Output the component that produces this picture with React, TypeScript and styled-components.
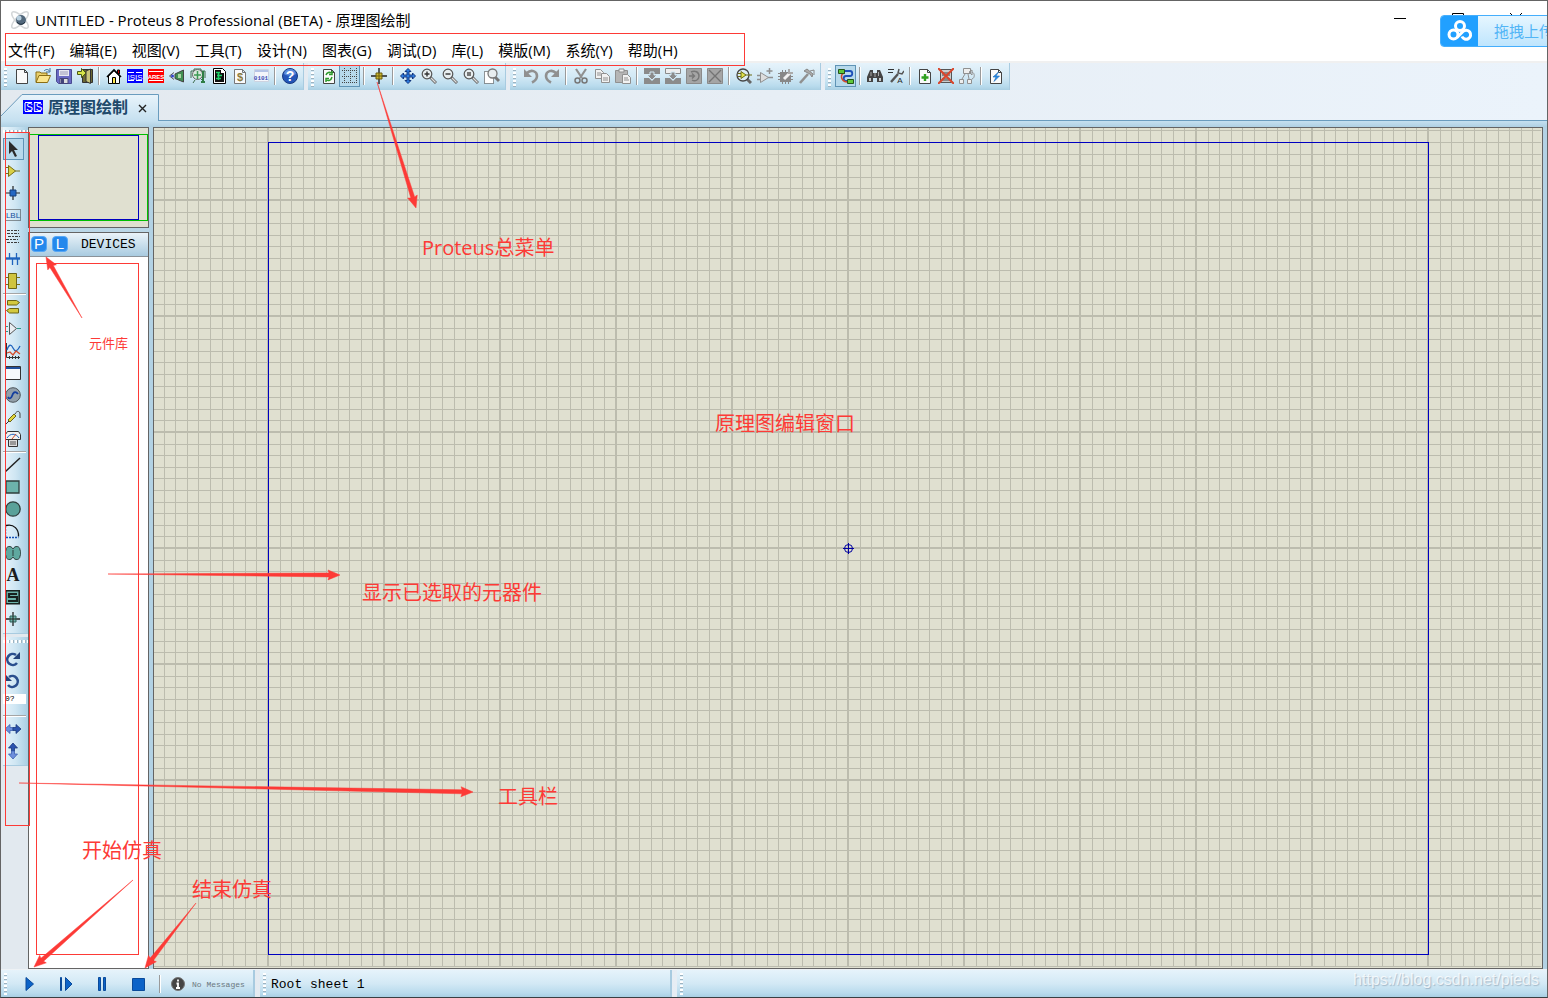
import React from 'react';
import styled, { createGlobalStyle, css } from 'styled-components';

const uiFont = '"Open Sans", "Noto Sans CJK SC", sans-serif';
const cjkFont = '"Noto Sans CJK SC", sans-serif';
const monoFont = '"Liberation Mono", "Noto Sans CJK SC", monospace';
const RED = '#fd3a36';
const EDGE = '#646464';

const GlobalStyle = createGlobalStyle`
  * { box-sizing: border-box; }
  body { margin: 0; background: #fff; overflow: hidden; }
  button { border: 0; padding: 0; background: none; font: inherit; color: inherit; }
`;

const Window = styled.div`
  position: relative;
  display: flex;
  flex-direction: column;
  height: 100vh;
  min-height: 700px;
  overflow: hidden;
  border: 1px solid ${EDGE};
  border-bottom-color: #3a3f42;
  background: linear-gradient(90deg, #e3e9ef, #ebf3fb);
  font-family: ${uiFont};
  color: #000;
`;

const TitleBar = styled.header`
  display: flex;
  align-items: center;
  gap: 5px;
  height: 37px;
  padding-left: 9px;
  background: #fff;
`;

const Title = styled.h1`
  flex: 1;
  margin: 0;
  font-size: 15px;
  font-weight: 400;
  line-height: 20px;
  white-space: pre;
`;

const Han = styled.span`
  font-family: ${cjkFont};
  font-size: 15px;
`;

const Caption = styled.div`
  display: flex;
  align-self: flex-start;
  margin-right: 2px;
`;

const CaptionButton = styled.button`
  display: flex;
  width: 58px;
  height: 34px;
  align-items: center;
  justify-content: center;
`;

const MenuBar = styled.nav`
  display: flex;
  gap: 15px;
  height: 25px;
  padding: 2px 0 1px 7px;
  border-bottom: 2px solid #f0f0f0;
  background: #fff;
`;

const MenuItem = styled.button`
  font-family: ${uiFont};
  font-size: 15px;
  line-height: 20px;
  white-space: nowrap;
`;

const ToolRow = styled.div`
  display: flex;
  gap: 4px;
  height: 27px;
`;

const barFill = css`
  background: linear-gradient(180deg, #e6f3fb 0%, #d3e9f5 50%, #b9dbed 85%, #a9cfe3 100%);
`;

const grip = css`
  background-image: repeating-linear-gradient(180deg, #fff 0 2px, #9db3c1 2px 3px, transparent 3px 4px);
`;

const ToolGroup = styled.div`
  position: relative;
  display: flex;
  align-items: center;
  padding: 0 3px 2px 10px;
  border-right: 1px solid #a8cbe0;
  ${barFill}
  &::before {
    content: '';
    position: absolute;
    left: 3px;
    top: 5px;
    bottom: 2px;
    width: 3px;
    ${grip}
  }
`;

const ToolButton = styled.button<{ $on?: boolean }>`
  display: flex;
  align-items: center;
  justify-content: center;
  width: 21px;
  height: 22px;
  ${(p) => p.$on && 'border: 1px solid #5f93b5; background: #b7d9ec;'}
`;

const Divider = styled.i`
  width: 2px;
  height: 18px;
  margin: 0 3px;
  background: linear-gradient(90deg, #9a9a9a 50%, #fff 50%);
`;

const TabRow = styled.div`
  display: flex;
  align-items: flex-end;
  height: 31px;
  &::after {
    content: '';
    flex: 1;
    height: 1px;
    background: #6a9cbe;
  }
`;

const Tab = styled.div`
  position: relative;
  display: flex;
  align-items: center;
  gap: 5px;
  width: 158px;
  height: 27px;
  padding-left: 22px;
`;

const TabShape = styled.svg`
  position: absolute;
  inset: 0;
`;

const TabLabel = styled.span`
  position: relative;
  padding-bottom: 4px;
  font-family: ${cjkFont};
  font-size: 16px;
  font-weight: 700;
  line-height: 20px;
  color: #1f4a6b;
`;

const TabIcon = styled.span`
  position: relative;
  display: flex;
  padding-bottom: 2px;
`;

const TabClose = styled.button`
  position: relative;
  display: flex;
  margin-left: 5px;
  padding-top: 1px;
`;

const Band = styled.div`
  height: 6px;
  background: linear-gradient(180deg, #c5e0f0, #afd0e3);
`;

const Body = styled.main`
  display: flex;
  flex: 1;
  min-height: 0;
  padding-right: 4px;
  background: #b3d2e4;
`;

const SideColumn = styled.div`
  display: flex;
  flex-direction: column;
  gap: 3px;
  width: 27px;
  padding-left: 2px;
  background: #e2e9ef;
`;

const SideBar = styled.div`
  position: relative;
  display: flex;
  flex-direction: column;
  align-items: flex-start;
  padding: 11px 0 3px 0;
  border-bottom: 1px solid #a8cbe0;
  background: linear-gradient(90deg, #e8f4fb 0%, #cfe6f3 50%, #a9cfe4 100%);
  &::before {
    content: '';
    position: absolute;
    left: 0;
    right: 0;
    top: 3px;
    height: 3px;
    background-image: repeating-linear-gradient(90deg, #fff 0 2px, #9db3c1 2px 3px, transparent 3px 4px);
  }
`;

const SideButton = styled(ToolButton)`
  padding-right: 1px;
`;

const SideDivider = styled.i`
  width: 23px;
  height: 2px;
  margin: 1px 0;
  background: linear-gradient(180deg, #a5a5a5 50%, #fff 50%);
`;

const AngleInput = styled.input`
  width: 23px;
  height: 10px;
  margin: 2px 0 10px;
  padding: 0 2px;
  border: 0;
  background: #fff;
  font-family: ${monoFont};
  font-size: 8px;
  line-height: 10px;
`;

const Panels = styled.div`
  display: flex;
  flex-direction: column;
  gap: 4px;
  width: 121px;
  margin-right: 4px;
  background: linear-gradient(180deg, #b3d2e4, #f2f8fb);
`;

const Overview = styled.div`
  height: 101px;
  border: 1px solid ${EDGE};
  background: #e0e0d0;
  & svg { display: block; }
`;

const Devices = styled.section`
  display: flex;
  flex: 1;
  flex-direction: column;
  border: 1px solid ${EDGE};
  background: #fff;
`;

const DevicesHead = styled.div`
  display: flex;
  align-items: center;
  gap: 5px;
  height: 24px;
  padding: 0 0 1px 2px;
  border-bottom: 1px solid #8a9299;
  background: linear-gradient(180deg, #eaf3f9, #a9cbe0);
`;

const LetterButton = styled.button`
  width: 16px;
  height: 16px;
  border: 1px solid #57a7f5;
  border-radius: 4px;
  background: #2488ec;
  color: #fff;
  font-family: "Liberation Sans", sans-serif;
  font-size: 15px;
  line-height: 14px;
`;

const DevicesTitle = styled.h2`
  margin: 2px 0 0 8px;
  font-family: ${monoFont};
  font-size: 13px;
  font-weight: 400;
  line-height: 20px;
`;

const Editor = styled.section`
  flex: 1;
  min-width: 0;
  padding: 0 1px 1px 0;
  overflow: hidden;
  border: 1px solid ${EDGE};
  background: #e0e0d0;
  & svg { display: block; width: 100%; height: 100%; }
`;

const StatusBar = styled.footer`
  display: flex;
  gap: 5px;
  height: 28px;
  border-top: 1px solid #eef2f5;
`;

const StatusGroup = styled.div<{ $grow?: boolean; $width?: number }>`
  position: relative;
  display: flex;
  align-items: center;
  padding-left: 11px;
  ${(p) => (p.$grow ? 'flex: 1;' : `width: ${p.$width}px; border-right: 2px solid #a8cbe0;`)}
  ${barFill}
  &::before {
    content: '';
    position: absolute;
    left: 3px;
    top: 3px;
    bottom: 2px;
    width: 3px;
    ${grip}
  }
`;

const PlayButton = styled.button`
  display: flex;
  flex: none;
  align-items: center;
  justify-content: center;
  width: 36px;
  height: 22px;
`;

const InfoMark = styled.span`
  display: flex;
  flex: none;
  justify-content: center;
  width: 28px;
`;

const Messages = styled.span`
  padding-top: 2px;
  font-family: ${monoFont};
  font-size: 8px;
  line-height: 12px;
  color: #6b7880;
  white-space: nowrap;
`;

const SheetName = styled.span`
  padding-top: 2px;
  font-family: ${monoFont};
  font-size: 13px;
  line-height: 20px;
`;

const Watermark = styled.span`
  margin-left: auto;
  padding: 0 8px 8px 0;
  font-family: "Liberation Sans", sans-serif;
  font-size: 16px;
  line-height: 18px;
  color: rgba(255, 255, 255, 0.75);
  text-shadow: 1px 1px 1px rgba(120, 140, 160, 0.5);
`;

const UploadBadge = styled.button`
  position: absolute;
  top: 14px;
  right: -34px;
  display: flex;
  width: 141px;
  height: 32px;
  overflow: hidden;
  border: 1px solid #45aefc;
  border-radius: 4px;
  background: linear-gradient(180deg, #e6f6ff, #bfe5fd);
  color: #52b5f6;
  font-family: ${cjkFont};
  font-size: 15px;
  line-height: 30px;
  white-space: nowrap;
`;

const BadgeLogo = styled.span`
  display: flex;
  width: 37px;
  height: 30px;
  margin-right: 16px;
  align-items: center;
  justify-content: center;
  background: #21a0ff;
`;

const Overlay = styled.svg`
  position: absolute;
  left: -1px;
  top: -1px;
  width: calc(100% + 2px);
  height: calc(100% + 2px);
  pointer-events: none;
`;

const Note = styled.span<{ $x: number; $y: number; $small?: boolean }>`
  position: absolute;
  left: ${(p) => p.$x}px;
  top: ${(p) => p.$y}px;
  font-family: ${uiFont};
  font-size: ${(p) => (p.$small ? 13 : 20)}px;
  line-height: 28px;
  color: ${RED};
  white-space: nowrap;
  pointer-events: none;
`;

/* ---------- icons ---------- */

const G = '#909090';
const lens = (stroke: string, fill: string) => (
  <>
    <path d="M9 9l6 6" stroke="#666" strokeWidth="3" />
    <path d="M10 10l4.500 4.500" stroke="#ddd" strokeWidth="1.200" />
    <circle cx="6" cy="6" r="4.800" fill={fill} stroke={stroke} strokeWidth="1.200" />
  </>
);
const page = (stroke = '#444') => (
  <path d="M2.500 1.500h8l3 3v11h-11z M10.500 1.500v3h3" fill="#fafafa" stroke={stroke} />
);

const isisStroke = (
  <path d="M0 1h20v14H0z" fill="#00f" />
);

const icons: Record<string, React.ReactNode> = {
  new: page(),
  open: (
    <>
      <path d="M1 14V4h4l1 1h6v3" fill="#e9cf6a" stroke="#8a6d14" />
      <path d="M1 14.500L4 7.500h11.500l-3 7z" fill="#fbe58c" stroke="#8a6d14" />
      <path d="M9 3c2-2 4-2 5.500 0M15 0v4h-4" fill="none" stroke="#3b6a99" />
    </>
  ),
  save: (
    <>
      <path d="M.5 1.500h15v14h-13l-2-2z" fill="#6a6ac4" stroke="#4a4a92" />
      <path d="M3 2h10v6H3z" fill="#e9e9f3" />
      <path d="M4 4h8M4 6h8" stroke="#9a9ab8" />
      <path d="M4 10.500h8v5H4z" fill="#ddd" stroke="#44447a" />
      <path d="M5 11h3v4H5z" fill="#44447a" />
    </>
  ),
  exit: (
    <>
      <path d="M5.500 1.500h10v13h-10z" fill="#6d6a34" stroke="#333" />
      <path d="M9 3l4.500-2v14.500L9 13.500z" fill="#c9c67a" stroke="#333" />
      <path d="M.5 3.500h4v-3L9 5 4.500 9.500V6.500h-4z" fill="#d7e64a" stroke="#4b5a16" />
    </>
  ),
  home: (
    <>
      <path d="M11.500 2h2v4h-2z" fill="#c00" stroke="#000" />
      <path d="M2.500 8v7.500h11V8L8 2.500z" fill="#fff" stroke="#000" />
      <path d="M1 9l7-7 7 7" fill="none" stroke="#000" strokeWidth="1.600" />
      <path d="M6.500 9.500h3v6h-3z" fill="#ffe94d" stroke="#000" />
    </>
  ),
  isis: (
    <>
      <path d="M0 1h16v14H0z" fill="#00f" />
      <text x="8" y="12" textAnchor="middle" fontFamily="Liberation Sans" fontSize="8" fill="#fff">ISIS</text>
      <path d="M1 4.500h6M9 4.500h6M1 12.500h6M9 12.500h6" stroke="#fff" />
    </>
  ),
  ares: (
    <>
      <path d="M0 1h16v14H0z" fill="#f00" />
      <text x="8" y="11" textAnchor="middle" fontFamily="Liberation Sans" fontWeight="700" fontSize="6" fill="#fff">ARES</text>
      <path d="M1 3.500h14M1 12.500h14" stroke="#fff" />
    </>
  ),
  view3d: (
    <>
      <path d="M6 6l8.500-4v12L6 10.500z" fill="#3f8f52" stroke="#444" />
      <path d="M9 6h3v4H9z" fill="#a9d6a4" />
      <path d="M5 4.500L.5 8 5 11.500" fill="none" stroke="#555" />
      <circle cx="3.500" cy="8" r="1.500" fill="#3344cc" />
    </>
  ),
  gerber: (
    <>
      <path d="M1 10V3h3V1h7v2h4v7M3 15l2-3M15 15l-4-4" fill="none" stroke="#3d6a4a" />
      <circle cx="7.500" cy="6.500" r="5" fill="#dceadf" stroke="#666" />
      <path d="M4 7h7M7.500 3v8" stroke="#3d9a55" strokeWidth="1.500" />
      <path d="M13 3v11M11 14h4" stroke="#2e7d45" strokeWidth="2" />
    </>
  ),
  explorer: (
    <>
      <path d="M2.500.5h9l3 3v12h-12z" fill="#fff" stroke="#000" />
      <path d="M4 2h6v3h3v9H4z" fill="#111" />
      <path d="M5 4.500h4M6 7.500h5M5 10.500h5M7.500 4v8" stroke="#1ed36a" strokeWidth="1.600" />
    </>
  ),
  bom: (
    <>
      {page('#777')}
      <text x="8" y="13" textAnchor="middle" fontFamily="Liberation Sans" fontWeight="700" fontSize="11" fill="#8a7a3a">$</text>
    </>
  ),
  code: (
    <>
      <path d="M1.500 1.500h14v12h-14z" fill="#f4f6fb" stroke="#cdd3e0" />
      <path d="M2 2h13v2H2z" fill="#b5c4e6" />
      <text x="8" y="12" textAnchor="middle" fontFamily="Liberation Mono" fontWeight="700" fontSize="6" fill="#3d4fb5">0101</text>
    </>
  ),
  help: (
    <>
      <circle cx="8" cy="8" r="7.500" fill="#2456b8" stroke="#173a80" />
      <path d="M2 6a6 5 0 0 1 12 0c-3 2-9 2-12 0z" fill="#5c8cdc" />
      <text x="8" y="13" textAnchor="middle" fontFamily="Liberation Sans" fontWeight="700" fontSize="14" fill="#fff">?</text>
    </>
  ),
  redraw: (
    <>
      {page()}
      <path d="M5 7c1-3 4-3 5-2M11 3v3.500H8M11 9c-1 4-4 4-5 3M5 14v-3.500h3" fill="none" stroke="#2c9a2c" strokeWidth="1.500" />
    </>
  ),
  grid: (
    <path d="M0 2.500h16M0 8.500h16M0 14.500h16M2.500 0v16M8.500 0v16M14.500 0v16" stroke="#444" strokeDasharray="1 1" />
  ),
  origin: (
    <>
      <path d="M8 0v16M0 8h16" stroke="#222" strokeWidth="1.400" />
      <path d="M5 5h6v6H5z" fill="#cdb92e" stroke="#6a5c0e" />
      <path d="M8 5v6M5 8h6" stroke="#6a5c0e" />
    </>
  ),
  pan: (
    <path
      d="M8 .5l3 3H9v3.500h3.500V5l3 3-3 3V9H9v3.500h2l-3 3-3-3h2V9H3.500v2l-3-3 3-3v2H7V3.500H5z"
      fill="#2c7be0" stroke="#12367e"
    />
  ),
  zoomIn: <>{lens('#555', '#e8eef0')}<path d="M3.500 6h5M6 3.500v5" stroke="#333" strokeWidth="1.400" /></>,
  zoomOut: <>{lens('#555', '#e8eef0')}<path d="M3.500 6h5" stroke="#333" strokeWidth="1.400" /></>,
  zoomAll: <>{lens('#555', '#e8eef0')}<path d="M4 4h4v4H4z" fill="#777" /></>,
  zoomArea: (
    <>
      <path d="M.5 3.500h9v12h-9z" fill="#fff" stroke="#333" strokeDasharray="1 1" />
      <path d="M11 9l4 4" stroke="#777" strokeWidth="3" />
      <circle cx="8.500" cy="5.500" r="4.500" fill="#e8eef0" stroke="#777" strokeWidth="1.300" />
    </>
  ),
  undo: (
    <>
      <path d="M4 5c4-4 10-2 10 3 0 3-2 5-5 6.500" fill="none" stroke={G} strokeWidth="2.600" />
      <path d="M1 1v8h8z" fill={G} />
    </>
  ),
  redo: (
    <>
      <path d="M12 5C8 1 2 3 2 8c0 3 2 5 5 6.500" fill="none" stroke={G} strokeWidth="2.600" />
      <path d="M15 1v8H7z" fill={G} />
    </>
  ),
  cut: (
    <>
      <path d="M3 1l6 9M13 1L7 10" stroke={G} strokeWidth="2.200" />
      <circle cx="4.500" cy="12.500" r="2.500" fill="none" stroke="#777" strokeWidth="1.500" />
      <circle cx="11.500" cy="12.500" r="2.500" fill="none" stroke="#777" strokeWidth="1.500" />
    </>
  ),
  copy: (
    <>
      <path d="M1.500 1.500h5l3 3v6h-8z" fill="#f2f2f2" stroke={G} />
      <path d="M7.500 5.500h5l3 3v6h-8z" fill="#f2f2f2" stroke={G} />
      <path d="M3 5h4M3 7h4M9 10h5M9 12h5" stroke={G} />
    </>
  ),
  paste: (
    <>
      <path d="M.5 2.500h12v12H.5z" fill="#b5b5b5" stroke={G} />
      <path d="M4 1h5v3H4z" fill="#eee" stroke={G} />
      <path d="M7.500 6.500h5l3 3v6h-8z" fill="#f2f2f2" stroke={G} />
      <path d="M9 10h4M9 12h5" stroke={G} />
    </>
  ),
  blockCopy: (
    <>
      <path d="M0 0h16v6H0zM0 10h5l3 3 3-3h5v6H0z" fill="#8b8b8b" />
      <path d="M6 4h4v3h3l-5 5-5-5h3z" fill="#8b8b8b" stroke="#d3e9f5" />
    </>
  ),
  blockMove: (
    <>
      <path d="M.5.5h15v5H.5z" fill="#eee" stroke="#8b8b8b" />
      <path d="M0 10h5l3 3 3-3h5v6H0z" fill="#8b8b8b" />
      <path d="M6 4h4v3h3l-5 5-5-5h3z" fill="#8b8b8b" stroke="#d3e9f5" />
    </>
  ),
  blockRotate: (
    <>
      <path d="M.5.5h15v15H.5z" fill="#a5a5a5" stroke="#8b8b8b" />
      <path d="M3 8h5M6 5.500L8.500 8 6 10.500M5 4c4-2 8 0 8 4s-4 6-7 4" fill="none" stroke="#777" strokeWidth="1.400" />
    </>
  ),
  blockDelete: (
    <>
      <path d="M.5.5h15v15H.5z" fill="#a5a5a5" stroke="#8b8b8b" />
      <path d="M2 2l12 12M14 2L2 14" stroke="#747474" strokeWidth="1.400" />
    </>
  ),
  pick: (
    <>
      <path d="M10 10l5 5" stroke="#666" strokeWidth="3" />
      <circle cx="7" cy="7" r="6" fill="#dcebf2" stroke="#444" strokeWidth="1.300" />
      <path d="M5 3.500v7l5-3.500z" fill="#dfe04a" stroke="#6c6c14" />
      <path d="M2 5.500h3M2 8.500h3M10 7h6" stroke="#6c6c14" />
    </>
  ),
  make: (
    <>
      <path d="M3.500 4.500v10l8-5z" fill="#ddd" stroke={G} />
      <path d="M0 7.500h3M0 11.500h3M11 9.500h5M12.500 0v6M9.500 3h6" stroke={G} strokeWidth="1.500" />
    </>
  ),
  packageTool: (
    <>
      <path d="M2 4h11v10H2z" fill="#888" />
      <path d="M0 5.500h15M0 8.500h15M0 11.500h15M4.500 2v14M7.500 2v14M10.500 2v14" stroke="#888" />
      <path d="M6 11l6-6" stroke="#f2f2f2" strokeWidth="3" />
      <path d="M11 1v4h4" fill="none" stroke="#aaa" strokeWidth="2" />
    </>
  ),
  decompose: (
    <>
      <path d="M1 15l8-9" stroke={G} strokeWidth="2.600" />
      <path d="M5 3l3-2 6 5-1 3-2-3z" fill="#aaa" stroke="#888" />
      <path d="M11 3l4-1v5" fill="none" stroke="#888" />
    </>
  ),
  wire: (
    <>
      <path d="M7 3h5c3 0 3 5 0 5H8c-3 0-3 5 0 5h2" fill="none" stroke="#1d4fb8" strokeWidth="1.800" />
      <path d="M7 5c-5 0-5 8 2 9" fill="none" stroke="#d04a2a" strokeWidth="1.500" />
      <path d="M.5 1.500h6v4h-6zM9.500 11.500h6v4h-6z" fill="#5fc83a" stroke="#24541a" />
    </>
  ),
  find: (
    <>
      <path d="M3 2h3v3h4V2h3l3 7v5h-6v-4H6v4H0V9z" fill="#444" />
      <path d="M2 10h2v3H2zM12 10h2v3h-2z" fill="#ccc" />
      <path d="M4 4v4M11.500 4v4M8 5v4" stroke="#aaa" />
    </>
  ),
  property: (
    <>
      <path d="M0 1.500h6M0 4.500h5" stroke="#333" />
      <path d="M3 14l7-8" stroke="#555" strokeWidth="2.400" />
      <path d="M11 1l-1 4 4 1 2-3" fill="none" stroke="#555" strokeWidth="1.500" />
      <text x="12" y="15" textAnchor="middle" fontFamily="Liberation Sans" fontSize="8" fill="#222">A</text>
    </>
  ),
  addSheet: <>{page()}<path d="M8 6v7M4.500 9.500h7" stroke="#2fa01e" strokeWidth="2.400" /></>,
  removeSheet: (
    <>
      <path d="M2.500 1.500h11v13h-11z" fill="#ccc" stroke="#555" />
      <path d="M4 4h8v4H4zM4 10h8v3H4z" fill="#888" />
      <path d="M0 0l16 16M16 0L0 16" stroke="#d8452c" strokeWidth="2" />
    </>
  ),
  exitSheet: (
    <>
      <path d="M4.500.5h7v5h-7zM.5 11.500h4v4h-4zM8.500 11.500h4v4h-4z" fill="#eee" stroke={G} />
      <path d="M6 6l-3 5M9 6l1 5M10 4l3-2v5zM13 4c3 1 3 6 0 7" fill="none" stroke={G} />
    </>
  ),
  erc: <>{page()}<path d="M10.500 4L5 9h3l-2 4.500L11.500 8H8z" fill="#2c8ee8" stroke="#1668b8" strokeWidth="0.600" /></>,

  select: <path d="M4 0v13l3-3 3 6 2-1-3-6h4z" fill="#2b2b2b" />,
  component: (
    <>
      <path d="M3.500 2.500v11l7-5.500z" fill="#d9cf45" stroke="#77701a" />
      <path d="M0 4.500h3M0 10.500h3M10 8h5" stroke="#77701a" />
    </>
  ),
  junction: (
    <>
      <path d="M8 1v14M0 8h15" stroke="#222" strokeWidth="1.200" />
      <path d="M5 5h6v6H5z" fill="#2468c4" stroke="#173f78" />
    </>
  ),
  label: (
    <>
      <path d="M.5 2.500h15v11H.5z" fill="none" stroke="#333" strokeDasharray="1 1" />
      <text x="8" y="11" textAnchor="middle" fontFamily="Liberation Sans" fontSize="8" fill="#14509c">LBL</text>
    </>
  ),
  script: (
    <path d="M2 1.500h12M2 4.500h12M3 7.500h12M1 10.500h12M2 13.500h12" stroke="#3c3c3c" strokeDasharray="3 1 2 1" />
  ),
  bus: (
    <>
      <path d="M1 7.500h14" stroke="#1f63bd" strokeWidth="2.400" />
      <path d="M4.500 2v6M11.500 2v6M7.500 8v6M12.500 8v6" stroke="#1f63bd" strokeWidth="1.300" />
    </>
  ),
  subcircuit: (
    <>
      <path d="M0 4.500h15M0 11.500h15" stroke="#77701a" />
      <path d="M3.500.5h8v15h-8z" fill="#cfc43e" stroke="#6b6416" />
    </>
  ),
  terminal: (
    <path d="M2.500 1.500h9l3 2-3 2.500h-9zM13.500 9.500h-9l-3 2 3 2.500h9z" fill="#d3c93e" stroke="#6b6416" />
  ),
  pin: (
    <>
      <path d="M4.500 1.500v12l7-6z" fill="#e9eef2" stroke="#555" />
      <path d="M0 5.500h3M0 10.500h3M12 7.500h4" stroke="#2c9a8a" />
    </>
  ),
  graph: (
    <>
      <path d="M1.500 0v14.500H15M4.500 13v3M7.500 13v3M10.500 13v3M13.500 13v3" fill="none" stroke="#333" />
      <path d="M2 7c2-6 4-6 6-2s4 4 7-2" fill="none" stroke="#1f63bd" strokeWidth="1.300" />
      <path d="M2 10l3-1 3 3 3-4 4 3" fill="none" stroke="#d04a2a" strokeWidth="1.300" />
    </>
  ),
  popup: (
    <>
      <path d="M.5 1.500h15v13H.5z" fill="#f6f9fc" stroke="#333" />
      <path d="M1 2h14v2H1z" fill="#1f4f9c" />
    </>
  ),
  generator: (
    <>
      <circle cx="8" cy="8" r="7.300" fill="#93a0aa" stroke="#4c545a" />
      <path d="M3 10c1 2 3 2 4-1s3-6 6-2" fill="none" stroke="#153f9e" strokeWidth="1.800" />
    </>
  ),
  probe: (
    <>
      <path d="M1 15l3-3" stroke="#333" />
      <path d="M3 11l6-6 2 2-6 6z" fill="#e0d53c" stroke="#6b6416" />
      <path d="M10 5c2-4 5-3 5 0v4" fill="none" stroke="#444" />
    </>
  ),
  instrument: (
    <>
      <path d="M.5 8.500v-5l2-3h11l2 3v5z" fill="#f2f2f2" stroke="#333" />
      <path d="M2 7c3-5 9-5 12 0" fill="none" stroke="#1f63bd" />
      <path d="M7 8l4-5" stroke="#d04a2a" />
      <path d="M3.500 8.500h9v7h-9z" fill="#ddd" stroke="#333" />
      <path d="M5 11h6M5 13h6" stroke="#555" />
    </>
  ),
  line: <path d="M0 15L15 1" stroke="#222" strokeWidth="1.500" />,
  box: <path d="M1 2h13v12H1z" fill="#6cb3ab" stroke="#2f3f3d" strokeWidth="1.300" />,
  circle: <circle cx="8" cy="8" r="7.200" fill="#5aa199" stroke="#2f3f3d" strokeWidth="1.300" />,
  arc: (
    <>
      <path d="M1 2.500c8-2 13 4 12.500 11" fill="none" stroke="#111" strokeWidth="1.300" />
      <path d="M.5 3v11.500h13" fill="none" stroke="#1450b4" strokeWidth="1.400" strokeDasharray="2 1" />
    </>
  ),
  path: (
    <path d="M8 4c2-4 7-3 7 1 1 2 1 4 0 6 0 4-5 5-7 1-2 4-7 3-7-1-1-2-1-4 0-6 0-4 5-5 7-1zM8 5v6" fill="#5fa89f" stroke="#2f3f3d" />
  ),
  text: (
    <text x="8" y="14" textAnchor="middle" fontFamily="Liberation Serif" fontWeight="700" fontSize="18" fill="#1d1d1d">A</text>
  ),
  symbol: (
    <>
      <path d="M.8 1.800h13.400v13H.8z" fill="#6cb3ab" stroke="#16211f" strokeWidth="1.600" />
      <path d="M12 5H4v3h8v4H3" fill="none" stroke="#16211f" strokeWidth="2.200" />
    </>
  ),
  marker: (
    <>
      <path d="M8 1v14M0 8h15" stroke="#222" strokeWidth="1.300" />
      <path d="M5 5h6v6H5z" fill="#6cb3ab" stroke="#2f5f59" />
      <path d="M8 5v6M5 8h6" stroke="#222" />
    </>
  ),
  rotateCw: (
    <>
      <path d="M11 4A5.500 5.500 0 1 0 12 12" fill="none" stroke="#2b4f8e" strokeWidth="2.600" />
      <path d="M15 1v7H8z" fill="#24437a" />
    </>
  ),
  rotateCcw: (
    <>
      <path d="M4 4A5.500 5.500 0 1 1 3 12" fill="none" stroke="#2b4f8e" strokeWidth="2.600" />
      <path d="M0 1v7h7z" fill="#24437a" />
    </>
  ),
  mirrorX: (
    <>
      <path d="M0 8l5-4.500v3h3v3H5v3z" fill="#6d8fdc" stroke="#3d61b0" strokeWidth="0.800" />
      <path d="M16 8l-5-4.500v3H8v3h3v3z" fill="#2c54ae" stroke="#1b397c" strokeWidth="0.800" />
    </>
  ),
  mirrorY: (
    <>
      <path d="M8 0l4.500 5h-3v3h-3V5h-3z" fill="#2c54ae" stroke="#1b397c" strokeWidth="0.800" />
      <path d="M8 16l4.500-5h-3V8h-3v3h-3z" fill="#6d8fdc" stroke="#3d61b0" strokeWidth="0.800" />
    </>
  ),
  play: <path d="M4 1.500v13l7.500-6.500z" fill="#0c63c8" stroke="#0a4a9a" />,
  step: <path d="M2.500 1.500h1v13h-1zM7.500 1.500v13l6.500-6.500z" fill="#0c63c8" stroke="#0a4a9a" />,
  pause: <path d="M4.500 1.500h2v13h-2zM9.500 1.500h2v13h-2z" fill="#0c63c8" stroke="#0a4a9a" />,
  stop: <path d="M2.500 2.500h12v12h-12z" fill="#0c63c8" stroke="#0a4a9a" />,
  info: (
    <>
      <circle cx="8" cy="8" r="6.500" fill="#444" stroke="#777" />
      <path d="M8 3.500v2M6.500 7.500H8V12M6 12h4" fill="none" stroke="#fff" strokeWidth="1.800" />
    </>
  ),
};

const Icon = ({ name }: { name: string }) => (
  <svg width="16" height="16" viewBox="0 0 16 16" fill="none" aria-hidden="true">
    {icons[name]}
  </svg>
);

/* ---------- data ---------- */

const menus = ['文件(F)', '编辑(E)', '视图(V)', '工具(T)', '设计(N)', '图表(G)', '调试(D)', '库(L)', '模版(M)', '系统(Y)', '帮助(H)'];

const toolGroups = [
  'new open save exit | home isis ares view3d gerber explorer bom code | help',
  'redraw grid* | origin | pan zoomIn zoomOut zoomAll zoomArea',
  'undo redo | cut copy paste | blockCopy blockMove blockRotate blockDelete | pick make packageTool decompose',
  'wire* | find property | addSheet removeSheet exitSheet | erc',
];

const sideTools =
  'select* component junction label script bus subcircuit | terminal pin graph popup generator probe instrument | line box circle arc path text symbol marker';

const parse = (spec: string) =>
  spec.split(' ').map((t) => ({ name: t.replace('*', ''), on: t.endsWith('*'), divider: t === '|' }));

/* ---------- drawings ---------- */

const PITCH = 116;
const minor = Array.from({ length: 10 }, (_, i) => Math.round((i * PITCH) / 10));

const Schematic = () => (
  <svg aria-label="原理图编辑窗口" shapeRendering="crispEdges">
    <defs>
      <pattern id="grid" x="114" y="72" width={PITCH} height={PITCH} patternUnits="userSpaceOnUse">
        {minor.map((p) => (
          <path key={p} d={`M${p} 0h1v${PITCH}h-1zM0 ${p}h${PITCH}v1H0z`} fill="#bcbcae" />
        ))}
        <path d={`M${PITCH - 1} 0h1v${PITCH}h-1zM0 ${PITCH - 1}h${PITCH}v1H0z`} fill="#bcbcae" />
      </pattern>
    </defs>
    <rect width="100%" height="100%" fill="url(#grid)" />
    <path d="M114 14h1161v813H114zM115 15v811h1159V15z" fill="#0000c0" fillRule="evenodd" />
    <g stroke="#0000a0" fill="none" shapeRendering="auto">
      <circle cx="694.500" cy="420.500" r="4" />
      <path d="M694.500 415v11M689 420.500h11" />
    </g>
  </svg>
);

const Arrow = ({ from, to }: { from: [number, number]; to: [number, number] }) => {
  const dx = to[0] - from[0];
  const dy = to[1] - from[1];
  const len = Math.hypot(dx, dy);
  const at = (along: number, side: number) =>
    `${to[0] - (dx / len) * along - (dy / len) * side},${to[1] - (dy / len) * along + (dx / len) * side}`;
  return (
    <polygon
      points={[at(len, 0), at(11, 2), at(12, 5), at(0, 0), at(12, -5), at(11, -2)].join(' ')}
      fill={RED}
      stroke={RED}
      strokeWidth="0.500"
    />
  );
};

export default function App() {
  return (
    <>
      <GlobalStyle />
      <Window>
        <TitleBar>
          <svg width="20" height="20" viewBox="0 0 20 20" aria-hidden="true">
            <g fill="none" stroke="#d3d6d8" strokeWidth="1.500">
              <ellipse cx="10" cy="10" rx="11" ry="4" transform="rotate(45 10 10)" />
              <ellipse cx="10" cy="10" rx="11" ry="4" transform="rotate(-45 10 10)" />
            </g>
            <circle cx="11" cy="10" r="5" fill="#52687c" />
            <circle cx="9" cy="8" r="2.500" fill="#b8cfdf" />
            <path d="M7 12c2 3 6 3 8 0" fill="none" stroke="#20303e" />
          </svg>
          <Title>UNTITLED - Proteus 8 Professional (BETA) - <Han>原理图绘制</Han></Title>
          <Caption>
            <CaptionButton aria-label="最小化">
              <svg width="12" height="12"><path d="M0 6.500h12" stroke="#000" /></svg>
            </CaptionButton>
            <CaptionButton aria-label="最大化">
              <svg width="12" height="12"><path d="M.5 1.500h11v10H.5z" fill="none" stroke="#000" /></svg>
            </CaptionButton>
            <CaptionButton aria-label="关闭">
              <svg width="12" height="12"><path d="M0 1l11 11M12 1L1 12" stroke="#000" /></svg>
            </CaptionButton>
          </Caption>
        </TitleBar>

        <MenuBar>
          {menus.map((m) => {
            const cut = m.indexOf('(');
            return (
              <MenuItem key={m}><Han>{m.slice(0, cut)}</Han>{m.slice(cut)}</MenuItem>
            );
          })}
        </MenuBar>

        <ToolRow>
          {toolGroups.map((g) => (
            <ToolGroup key={g} role="toolbar">
              {parse(g).map((t, i) =>
                t.divider ? <Divider key={i} /> : (
                  <ToolButton key={i} $on={t.on} aria-label={t.name}><Icon name={t.name} /></ToolButton>
                ),
              )}
            </ToolGroup>
          ))}
        </ToolRow>

        <TabRow>
          <Tab>
            <TabShape width="158" height="27" aria-hidden="true">
              <defs>
                <linearGradient id="tab" x1="0" y1="0" x2="0" y2="1">
                  <stop offset="0" stopColor="#e9f4fb" />
                  <stop offset="1" stopColor="#c5e0f0" />
                </linearGradient>
              </defs>
              <path d="M0 27L0 23 22 .5h135.500V27" fill="url(#tab)" />
              <path d="M0 22L21 .5h136.500V27" fill="none" stroke="#6a9cbe" />
            </TabShape>
            <TabIcon>
              <svg width="20" height="16" viewBox="0 0 20 16" aria-hidden="true">
                {isisStroke}
                <text x="10" y="12" textAnchor="middle" fontFamily="Liberation Sans" fontSize="10" fill="#fff">ISIS</text>
                <path d="M2 3.500h7M11 3.500h7M2 12.500h7M11 12.500h7" stroke="#fff" />
              </svg>
            </TabIcon>
            <TabLabel>原理图绘制</TabLabel>
            <TabClose aria-label="关闭标签">
              <svg width="9" height="9"><path d="M1 1l7 7M8 1L1 8" stroke="#222" strokeWidth="1.400" /></svg>
            </TabClose>
          </Tab>
        </TabRow>
        <Band />

        <Body>
          <SideColumn>
            <SideBar role="toolbar">
              {parse(sideTools).map((t, i) =>
                t.divider ? <SideDivider key={i} /> : (
                  <SideButton key={i} $on={t.on} aria-label={t.name}><Icon name={t.name} /></SideButton>
                ),
              )}
            </SideBar>
            <SideBar role="toolbar">
              <SideButton aria-label="rotateCw"><Icon name="rotateCw" /></SideButton>
              <SideButton aria-label="rotateCcw"><Icon name="rotateCcw" /></SideButton>
              <AngleInput aria-label="角度" defaultValue="0?" />
              <SideDivider />
              <SideButton aria-label="mirrorX"><Icon name="mirrorX" /></SideButton>
              <SideButton aria-label="mirrorY"><Icon name="mirrorY" /></SideButton>
            </SideBar>
          </SideColumn>

          <Panels>
            <Overview>
              <svg width="119" height="99" fill="none" shapeRendering="crispEdges" aria-label="预览">
                <path d="M0 6.500h118.500v86H0" stroke="#00c000" />
                <path d="M9.500 7.500h100v84h-100z" stroke="#0000c0" />
              </svg>
            </Overview>
            <Devices>
              <DevicesHead>
                <LetterButton>P</LetterButton>
                <LetterButton>L</LetterButton>
                <DevicesTitle>DEVICES</DevicesTitle>
              </DevicesHead>
            </Devices>
          </Panels>

          <Editor><Schematic /></Editor>
        </Body>

        <StatusBar>
          <StatusGroup $width={254}>
            <PlayButton aria-label="开始"><Icon name="play" /></PlayButton>
            <PlayButton aria-label="单步"><Icon name="step" /></PlayButton>
            <PlayButton aria-label="暂停"><Icon name="pause" /></PlayButton>
            <PlayButton aria-label="停止"><Icon name="stop" /></PlayButton>
            <Divider />
            <InfoMark><Icon name="info" /></InfoMark>
            <Messages>No Messages</Messages>
          </StatusGroup>
          <StatusGroup $width={412}><SheetName>Root sheet 1</SheetName></StatusGroup>
          <StatusGroup $grow><Watermark>https://blog.csdn.net/pieds</Watermark></StatusGroup>
        </StatusBar>

        <UploadBadge>
          <BadgeLogo>
            <svg width="26" height="22" viewBox="0 0 26 22" fill="none" stroke="#fff" strokeWidth="3" aria-hidden="true">
              <circle cx="13" cy="6" r="4.500" />
              <circle cx="6.500" cy="14.500" r="4.500" />
              <path d="M10 17.500l6-6a4.500 4.500 0 1 1-1 5" />
            </svg>
          </BadgeLogo>
          拖拽上传
        </UploadBadge>

        <Overlay>
          <g fill="none" stroke={RED} shapeRendering="crispEdges">
            <path d="M5.500 33.500h739v32H5.500z" />
            <path d="M5.500 132.500h24v693h-24z" />
            <path d="M36.500 263.500h102v691h-102z" />
          </g>
          <Arrow from={[377, 82]} to={[416, 208]} />
          <Arrow from={[82, 318]} to={[46, 257]} />
          <Arrow from={[108, 574]} to={[340, 575]} />
          <Arrow from={[19, 783]} to={[473, 792]} />
          <Arrow from={[133, 880]} to={[34, 967]} />
          <Arrow from={[196, 903]} to={[145, 968]} />
        </Overlay>
        <Note $x={421} $y={233}>Proteus总菜单</Note>
        <Note $x={88} $y={328} $small>元件库</Note>
        <Note $x={714} $y={409}>原理图编辑窗口</Note>
        <Note $x={361} $y={578}>显示已选取的元器件</Note>
        <Note $x={497} $y={782}>工具栏</Note>
        <Note $x={81} $y={836}>开始仿真</Note>
        <Note $x={191} $y={875}>结束仿真</Note>
      </Window>
    </>
  );
}
